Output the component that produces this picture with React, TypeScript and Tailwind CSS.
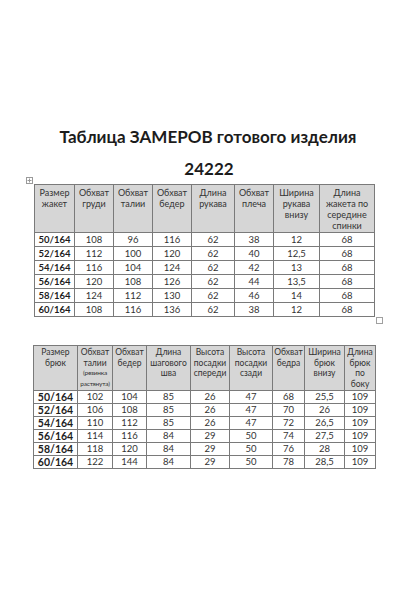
import React from "react";

const jacketHead = [
  ["Размер", "жакет"],
  ["Обхват", "груди"],
  ["Обхват", "талии"],
  ["Обхват", "бедер"],
  ["Длина", "рукава"],
  ["Обхват", "плеча"],
  ["Ширина", "рукава", "внизу"],
  ["Длина", "жакета по", "середине", "спинки"],
];
const jacketWidths = [40, 39, 39, 39, 43, 39, 46, 55];
const jacketRows = [
  ["50/164", "108", "96", "116", "62", "38", "12", "68"],
  ["52/164", "112", "100", "120", "62", "40", "12,5", "68"],
  ["54/164", "116", "104", "124", "62", "42", "13", "68"],
  ["56/164", "120", "108", "126", "62", "44", "13,5", "68"],
  ["58/164", "124", "112", "130", "62", "46", "14", "68"],
  ["60/164", "108", "116", "136", "62", "38", "12", "68"],
];

const pantsHead = [
  ["Размер", "брюк"],
  ["Обхват", "талии"],
  ["Обхват", "бедер"],
  ["Длина", "шагового", "шва"],
  ["Высота", "посадки", "спереди"],
  ["Высота", "посадки", "сзади"],
  ["Обхват", "бедра"],
  ["Ширина", "брюк", "внизу"],
  ["Длина", "брюк", "по", "боку"],
];
const pantsWidths = [44, 35, 34, 44, 39, 43, 32, 40, 31];
const pantsRows = [
  ["50/164", "102", "104", "85", "26", "47", "68", "25,5", "109"],
  ["52/164", "106", "108", "85", "26", "47", "70", "26", "109"],
  ["54/164", "110", "112", "85", "26", "47", "72", "26,5", "109"],
  ["56/164", "114", "116", "84", "29", "50", "74", "27,5", "109"],
  ["58/164", "118", "120", "84", "29", "50", "76", "28", "109"],
  ["60/164", "122", "144", "84", "29", "50", "78", "28,5", "109"],
];

export default function App() {
  return (
    <div
      className="w-[400px] h-[600px] bg-white text-[#1c1c1c] pt-[127px]"
      style={{ fontFamily: "Lato, 'Open Sans', sans-serif" }}
    >
      {/* Title */}
      <h1 className="text-center text-[17px] leading-[20px] font-bold pl-[16px]">
        Таблица ЗАМЕРОВ готового изделия
      </h1>
      <p className="text-center text-[17px] leading-[20px] font-bold mt-[12px] pl-[18px]">24222</p>

      {/* Jacket table */}
      <div className="relative ml-[34px] mt-[5px] w-fit">
        <svg className="absolute left-[-8px] top-[-7px]" width="7" height="7" viewBox="0 0 7 7">
          <rect x="0.5" y="0.5" width="6" height="6" fill="white" stroke="#9a9a9a" />
          <path d="M3.5 1.5v4M1.5 3.5h4" stroke="#9a9a9a" />
        </svg>
        <table className="border-collapse table-fixed text-[9.5px]">
          <colgroup>
            {jacketWidths.map((w, i) => (
              <col key={i} style={{ width: w }} />
            ))}
          </colgroup>
          <thead>
            <tr className="h-[48px] bg-[#d6d6d6]">
              {jacketHead.map((lines, i) => (
                <th
                  key={i}
                  className="border border-[#7a7a7a] align-top font-normal text-[9px] leading-[11px] pt-[2px] pb-0 px-0 text-[#333]"
                >
                  {lines.map((l, j) => (
                    <div key={j}>{l}</div>
                  ))}
                </th>
              ))}
            </tr>
          </thead>
          <tbody>
            {jacketRows.map((row, r) => (
              <tr key={r} className="h-[14px]">
                {row.map((c, i) => (
                  <td
                    key={i}
                    className={`border border-[#7a7a7a] text-center leading-[11px] p-0 ${
                      i === 0 ? "font-bold" : "text-[#333]"
                    }`}
                  >
                    {c}
                  </td>
                ))}
              </tr>
            ))}
          </tbody>
        </table>
        <div className="absolute right-[-8px] bottom-[-7px] w-[7px] h-[7px] border border-[#a0a0a0] bg-white" />
      </div>

      {/* Pants table */}
      <div className="ml-[33px] mt-[28px] w-fit">
        <table className="border-collapse table-fixed text-[9.5px]">
          <colgroup>
            {pantsWidths.map((w, i) => (
              <col key={i} style={{ width: w }} />
            ))}
          </colgroup>
          <thead>
            <tr className="h-[45px] bg-[#d6d6d6]">
              {pantsHead.map((lines, i) => (
                <th
                  key={i}
                  className="border border-[#7a7a7a] align-top font-normal text-[8.5px] leading-[10.5px] pt-[1px] pb-0 px-0 text-[#333] whitespace-nowrap"
                >
                  {lines.map((l, j) => (
                    <div key={j}>{l}</div>
                  ))}
                  {i === 1 && (
                    <div className="text-[6.5px] leading-[10.5px] -mx-[1px] tracking-[-0.2px]">
                      (резинка
                      <br />
                      растянута)
                    </div>
                  )}
                </th>
              ))}
            </tr>
          </thead>
          <tbody>
            {pantsRows.map((row, r) => (
              <tr key={r} className="h-[13px]">
                {row.map((c, i) => (
                  <td
                    key={i}
                    className={`border border-[#7a7a7a] text-center leading-[10px] p-0 ${
                      i === 0 ? "font-bold text-[10.5px]" : "text-[#333]"
                    }`}
                  >
                    {c}
                  </td>
                ))}
              </tr>
            ))}
          </tbody>
        </table>
      </div>
    </div>
  );
}
